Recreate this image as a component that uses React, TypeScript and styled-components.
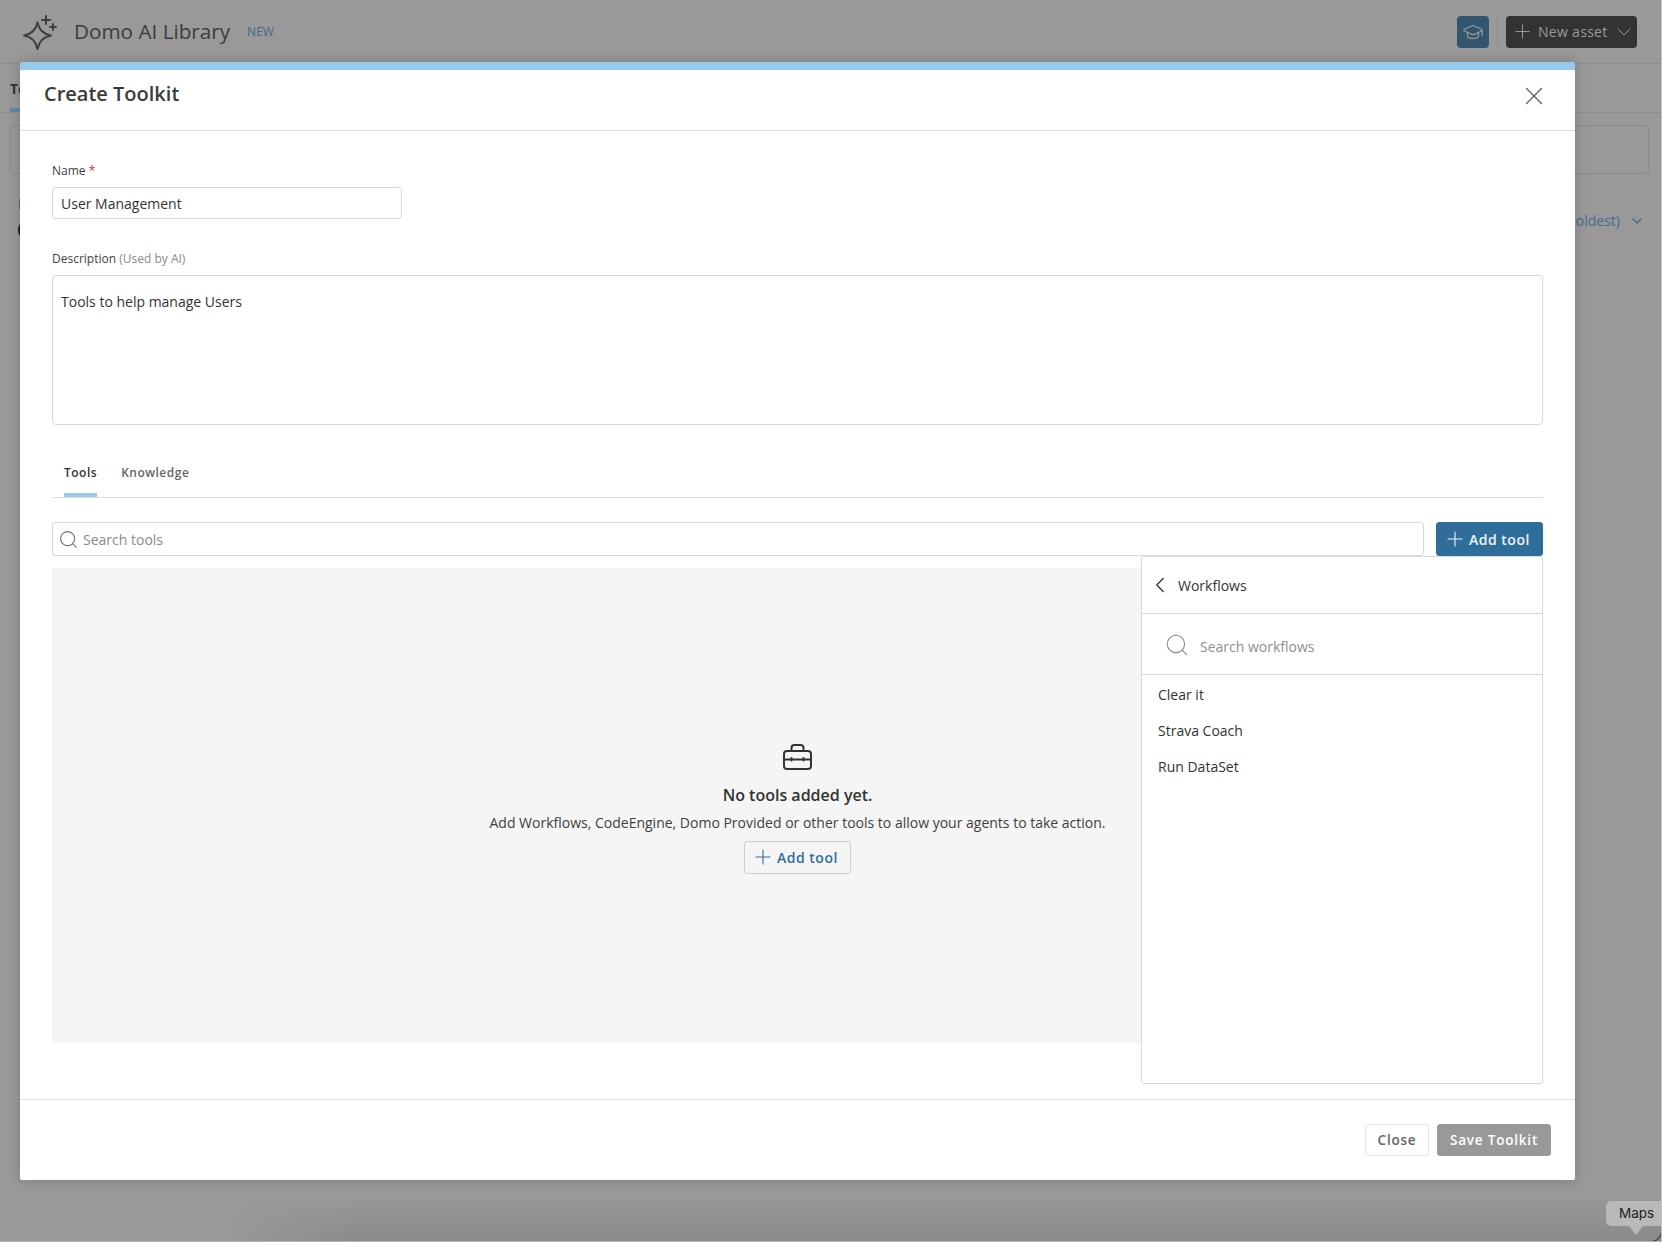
import React, { FC } from "react";
import styled, { createGlobalStyle } from "styled-components";
import { ChevronDown, ChevronLeft, GraduationCap, Plus, Search, X } from "lucide-react";

const GlobalStyle = createGlobalStyle`
  html, body {
    margin: 0;
    padding: 0;
    background: #999999;
    font-family: "Open Sans", "Liberation Sans", sans-serif;
  }
  * { box-sizing: border-box; }
`;

const Page = styled.div`
  position: relative;
  width: 1662px;
  height: 1242px;
  overflow: hidden;
  background: #999999;
  border-right: 1px solid #c4c4c4;
  border-bottom: 1px solid #b4b4b4;
`;

/* dimmed page behind the dialog */
const TopBar = styled.header`
  display: flex;
  align-items: center;
  height: 64px;
  padding: 0 24px 0 22px;
  border-bottom: 1px solid #8d8d8d;
`;

const AppTitle = styled.h1`
  margin: 0 0 2px 16px;
  font-size: 20.7px;
  font-weight: 500;
  color: #3c3c3c;
`;

const NewTag = styled.span`
  margin: 0 0 1px 17px;
  font-size: 12px;
  color: #446a85;
`;

const TopActions = styled.div`
  display: flex;
  align-items: center;
  margin-left: auto;
`;

const HatButton = styled.div`
  display: flex;
  align-items: center;
  justify-content: center;
  width: 32px;
  height: 32px;
  border-radius: 4px;
  background: #33566f;
  color: #999999;
`;

const TopDivider = styled.div`
  width: 1px;
  height: 31px;
  margin: 0 8px;
  background: #8d8d8d;
`;

const NewAssetButton = styled.div`
  display: flex;
  align-items: center;
  gap: 4px;
  width: 131px;
  height: 32px;
  padding: 0 0 0 5px;
  border-radius: 4px;
  background: #333333;
  color: #999999;
  font-size: 14px;
  font-weight: 400;
  letter-spacing: 0.3px;
  white-space: nowrap;
`;

const PageTabs = styled.nav`
  height: 49px;
  padding-left: 10px;
  border-bottom: 1px solid #8d8d8d;
`;

const PageTab = styled.div`
  display: inline-block;
  height: 48px;
  padding-top: 15px;
  font-size: 14px;
  font-weight: 700;
  color: #333333;
  border-bottom: 4px solid #5f8aa8;
`;

const FilterBox = styled.div`
  width: 1639px;
  height: 49px;
  margin: 12px 0 0 10px;
  border: 1px solid #8a8a8a;
  border-radius: 4px;
`;

const ListHead = styled.div`
  display: flex;
  align-items: flex-start;
  justify-content: space-between;
  margin-top: 20px;
  padding: 0 16px 0 18px;
`;

const ListLabel = styled.div`
  font-size: 14px;
  color: #444444;
`;

const Avatar = styled.div`
  width: 22px;
  height: 22px;
  margin-top: 6px;
  border-radius: 50%;
  background: #222222;
`;

const SortLink = styled.div`
  display: flex;
  align-items: center;
  gap: 9px;
  margin-top: 17px;
  font-size: 14px;
  color: #456c88;
`;

/* dock hint along the bottom edge */
const BottomShade = styled.div`
  position: absolute;
  left: 230px;
  right: 0;
  bottom: 0;
  height: 44px;
  background: linear-gradient(to bottom, rgba(0, 0, 0, 0), rgba(0, 0, 0, 0.1));
  mask-image: linear-gradient(to right, transparent, black 140px);
`;

const Dialog = styled.section`
  position: absolute;
  left: 20px;
  top: 62px;
  display: flex;
  flex-direction: column;
  width: 1555px;
  height: 1118px;
  background: #ffffff;
  border-top: 8px solid #97c9ec;
  border-radius: 2px;
  box-shadow: 0 0 14px rgba(0, 0, 0, 0.2);
`;

const DialogHeader = styled.div`
  display: flex;
  align-items: flex-start;
  justify-content: space-between;
  height: 61px;
  padding: 10px 26px 0 24px;
  border-bottom: 1px solid #dddddd;
`;

const DialogTitle = styled.h2`
  margin: 0;
  font-size: 20px;
  line-height: 28px;
  font-weight: 600;
  color: #3b3b3b;
`;

const CloseIcon = styled.div`
  display: flex;
  margin-top: 1px;
  color: #5c5c5c;
`;

const DialogBody = styled.div`
  padding: 32px 32px 0;
`;

const FieldLabel = styled.label`
  display: block;
  font-size: 12px;
  line-height: 16px;
  color: #3f3f3f;
`;

const Required = styled.span`
  color: #e5263c;
`;

const Hint = styled.span`
  color: #8a8a8a;
`;

const NameInput = styled.div`
  width: 350px;
  height: 32px;
  margin: 8px 0 32px;
  padding: 0 8px;
  border: 1px solid #d9d9d9;
  border-radius: 3px;
  font-size: 14px;
  line-height: 31px;
  color: #333333;
`;

const DescriptionInput = styled.div`
  height: 150px;
  margin-top: 8px;
  padding: 16px 8px;
  border: 1px solid #d9d9d9;
  border-radius: 4px;
  font-size: 14px;
  line-height: 20px;
  color: #333333;
`;

const TabRow = styled.div`
  display: flex;
  gap: 24px;
  height: 50px;
  margin-top: 23px;
  padding-left: 12px;
  border-bottom: 1px solid #dddddd;
`;

const Tab = styled.div<{ $active?: boolean }>`
  height: 49px;
  padding-top: 16px;
  font-size: 12px;
  line-height: 18px;
  font-weight: 600;
  letter-spacing: 0.5px;
  color: ${(p) => (p.$active ? "#333333" : "#666666")};
  border-bottom: 4px solid ${(p) => (p.$active ? "#97c9ec" : "transparent")};
`;

const ToolBar = styled.div`
  position: relative;
  display: flex;
  gap: 12px;
  margin-top: 24px;
`;

const SearchBox = styled.div`
  display: flex;
  flex: 1;
  align-items: center;
  gap: 4px;
  height: 34px;
  padding: 0 5px;
  border: 1px solid #d9d9d9;
  border-radius: 3px;
  font-size: 14px;
  color: #8a8a8a;
  svg { color: #707070; }
`;

const AddButton = styled.button<{ $outline?: boolean }>`
  display: flex;
  align-items: center;
  gap: 2px;
  width: 107px;
  height: ${(p) => (p.$outline ? "33px" : "34px")};
  padding: 0 0 ${(p) => (p.$outline ? "1px" : "0")} 6px;
  border: 1px solid ${(p) => (p.$outline ? "#cfcfcf" : "#2f6d9b")};
  border-radius: 3px;
  background: ${(p) => (p.$outline ? "transparent" : "#2f6d9b")};
  color: ${(p) => (p.$outline ? "#2f6d9b" : "#eef3f7")};
  font-family: inherit;
  font-size: 14px;
  font-weight: 600;
  letter-spacing: 0.5px;
  white-space: nowrap;
`;

const Menu = styled.div`
  position: absolute;
  top: 100%;
  right: 0;
  display: flex;
  flex-direction: column;
  width: 402px;
  height: 528px;
  background: #ffffff;
  border: 1px solid #d9d9d9;
  border-radius: 3px;
`;

const MenuHeader = styled.div`
  display: flex;
  align-items: center;
  gap: 5px;
  height: 57px;
  padding-left: 5px;
  border-bottom: 1px solid #d9d9d9;
  font-size: 14px;
  color: #333333;
`;

const MenuSearch = styled.div`
  display: flex;
  align-items: center;
  gap: 10px;
  height: 61px;
  padding: 5px 0 0 22px;
  border-bottom: 1px solid #d9d9d9;
  font-size: 14px;
  color: #8f8f8f;
  svg { color: #8a8a8a; margin-top: -3px; }
`;

const MenuList = styled.div`
  padding-top: 2px;
`;

const MenuItem = styled.div`
  height: 36px;
  padding-left: 16px;
  font-size: 14px;
  line-height: 36px;
  color: #333333;
`;

const EmptyState = styled.div`
  display: flex;
  flex-direction: column;
  align-items: center;
  height: 475px;
  margin-top: 12px;
  padding-top: 176px;
  background: #f5f5f5;
`;

const EmptyTitle = styled.div`
  margin-top: 14px;
  font-size: 16px;
  line-height: 22px;
  font-weight: 600;
  color: #333333;
`;

const EmptyText = styled.div`
  margin: 7px 0 8px;
  font-size: 14px;
  line-height: 20px;
  color: #3f3f3f;
`;

const DialogFooter = styled.div`
  display: flex;
  justify-content: flex-end;
  gap: 8px;
  height: 81px;
  margin-top: auto;
  padding: 24px 24px 0 0;
  border-top: 1px solid #dddddd;
`;

const FooterButton = styled.button<{ $solid?: boolean }>`
  height: 32px;
  padding: 0;
  width: ${(p) => (p.$solid ? "114px" : "64px")};
  border: 1px solid ${(p) => (p.$solid ? "#999999" : "#e6e6e6")};
  border-radius: 3px;
  background: ${(p) => (p.$solid ? "#999999" : "#ffffff")};
  color: ${(p) => (p.$solid ? "#ffffff" : "#666666")};
  font-family: inherit;
  font-size: 13.5px;
  font-weight: 600;
  letter-spacing: 0.8px;
`;

const Tooltip = styled.div`
  position: absolute;
  right: -1px;
  bottom: 15px;
  width: 56px;
  height: 25px;
  padding-left: 13px;
  background: #b9b9b9;
  border-radius: 5px 0 0 5px;
  font-family: Inter, "Liberation Sans", sans-serif;
  font-size: 13.5px;
  line-height: 25px;
  color: #222222;
  &::after {
    content: "";
    position: absolute;
    left: 23px;
    top: 100%;
    border-left: 7px solid transparent;
    border-right: 7px solid transparent;
    border-top: 9px solid #b9b9b9;
  }
`;

const CornerMark = styled.svg`
  position: absolute;
  right: -1px;
  bottom: -1px;
`;

const SparkMark: FC = () => (
  <svg width="36" height="38" viewBox="0 0 36 38" fill="none" stroke="#3f3f3f" strokeWidth="2" strokeLinejoin="round" strokeLinecap="round">
    <path d="M15.5 9.5C17 17 21 21 29 22.5C21 24 17 28 15.5 36C14 28 10 24 2 22.5C10 21 14 17 15.5 9.5Z" />
    <path d="M24 3v8M20 7h8" />
    <path d="M31 11v6M28 14h6" />
  </svg>
);

const ToolboxMark: FC = () => (
  <svg width="29" height="26" viewBox="0 0 29 26" fill="none" stroke="#333333" strokeWidth="2" strokeLinejoin="round" strokeLinecap="round">
    <rect x="1" y="7" width="27" height="18" rx="3" />
    <path d="M8.5 7V4a3 3 0 0 1 3-3h6a3 3 0 0 1 3 3v3" />
    <path d="M1 15.5h27" />
    <path d="M8.5 14v2.5M20.5 14v2.5" />
  </svg>
);

const App: FC = () => {
  return (
    <Page>
      <GlobalStyle />
      <TopBar>
        <SparkMark />
        <AppTitle>Domo AI Library</AppTitle>
        <NewTag>NEW</NewTag>
        <TopActions>
          <HatButton>
            <GraduationCap size={22} strokeWidth={1.3} />
          </HatButton>
          <TopDivider />
          <NewAssetButton>
            <Plus size={23} strokeWidth={1} />
            New asset
            <ChevronDown size={24} strokeWidth={1} />
          </NewAssetButton>
        </TopActions>
      </TopBar>
      <PageTabs>
        <PageTab>Tools</PageTab>
      </PageTabs>
      <FilterBox />
      <ListHead>
        <div>
          <ListLabel>I</ListLabel>
          <Avatar />
        </div>
        <SortLink>
          Sort (newest to oldest)
          <ChevronDown size={16} strokeWidth={2} />
        </SortLink>
      </ListHead>
      <BottomShade />

      <Dialog>
        <DialogHeader>
          <DialogTitle>Create Toolkit</DialogTitle>
          <CloseIcon>
            <X size={30} strokeWidth={1} />
          </CloseIcon>
        </DialogHeader>
        <DialogBody>
          <FieldLabel>
            Name <Required>*</Required>
          </FieldLabel>
          <NameInput>User Management</NameInput>
          <FieldLabel>
            Description <Hint>(Used by AI)</Hint>
          </FieldLabel>
          <DescriptionInput>Tools to help manage Users</DescriptionInput>
          <TabRow>
            <Tab $active>Tools</Tab>
            <Tab>Knowledge</Tab>
          </TabRow>
          <ToolBar>
            <SearchBox>
              <Search size={21} strokeWidth={1.2} />
              Search tools
            </SearchBox>
            <AddButton>
              <Plus size={24} strokeWidth={1.1} />
              Add tool
            </AddButton>
            <Menu>
              <MenuHeader>
                <ChevronLeft size={26} strokeWidth={1.2} />
                Workflows
              </MenuHeader>
              <MenuSearch>
                <Search size={26} strokeWidth={1} />
                Search workflows
              </MenuSearch>
              <MenuList>
                <MenuItem>Clear it</MenuItem>
                <MenuItem>Strava Coach</MenuItem>
                <MenuItem>Run DataSet</MenuItem>
              </MenuList>
            </Menu>
          </ToolBar>
          <EmptyState>
            <ToolboxMark />
            <EmptyTitle>No tools added yet.</EmptyTitle>
            <EmptyText>Add Workflows, CodeEngine, Domo Provided or other tools to allow your agents to take action.</EmptyText>
            <AddButton $outline>
              <Plus size={24} strokeWidth={1.1} />
              Add tool
            </AddButton>
          </EmptyState>
        </DialogBody>
        <DialogFooter>
          <FooterButton>Close</FooterButton>
          <FooterButton $solid>Save Toolkit</FooterButton>
        </DialogFooter>
      </Dialog>

      <Tooltip>Maps</Tooltip>
      <CornerMark width="12" height="16" viewBox="0 0 12 16" fill="none">
        <path d="M11.5 0v5C11.5 11 7 15.5 1 15.5" stroke="#222222" strokeWidth="1" />
      </CornerMark>
    </Page>
  );
};

export default App;
